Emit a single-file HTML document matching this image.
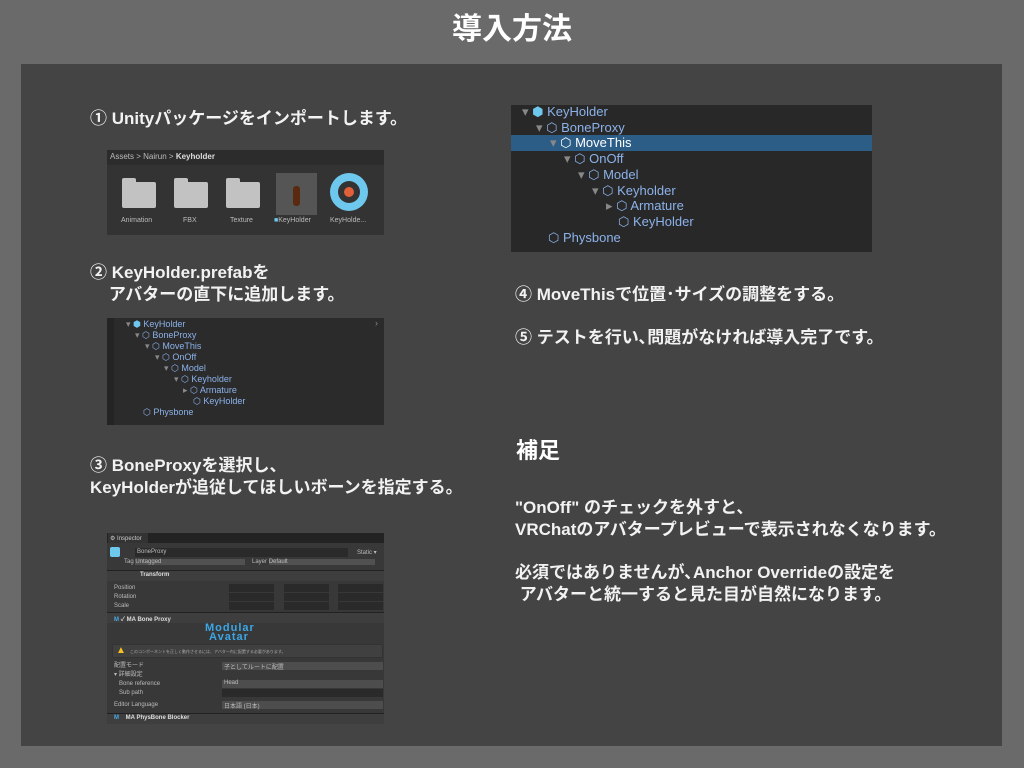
<!DOCTYPE html>
<html><head><meta charset="utf-8">
<style>
*{margin:0;padding:0;box-sizing:border-box}
body{width:1024px;height:768px;background:#6a6a6a;position:relative;overflow:hidden;font-family:"Liberation Sans","Noto Sans CJK JP",sans-serif;color:#fff}
.a{position:absolute;white-space:nowrap}
.t{font-weight:bold;font-size:17px;color:#f2f2f2;line-height:22px}
.h{color:#8cb2ea;font-size:13px}
.sh{color:#8cb2ea;font-size:9px}
.g{color:#bbb;font-size:6px}
.fld{position:absolute;background:#2a2a2a;height:8px}
.fo{position:absolute;width:34px;height:26px;background:#c2c2c2;border-radius:2px}
.fo:before{content:"";position:absolute;left:0;top:-4px;width:14px;height:6px;background:#c2c2c2;border-radius:2px 2px 0 0}
</style></head><body>
<div class="a" style="left:0;width:1024px;top:10px;text-align:center;font-size:30px;font-weight:bold;line-height:40px">導入方法</div>
<div class="a" style="left:21px;top:64px;width:981px;height:682px;background:#444"></div>

<div class="a t" style="left:90px;top:108px">① Unityパッケージをインポートします。</div>

<!-- project panel -->
<div class="a" style="left:107px;top:150px;width:277px;height:85px;background:#2c2c2c"></div>
<div class="a" style="left:110px;top:152px;font-size:8px;color:#bbb">Assets &gt; Nairun &gt; <b style="color:#ddd">Keyholder</b></div>
<div class="a" style="left:107px;top:165px;width:277px;height:70px;background:#333"></div>
<div class="fo" style="left:122px;top:182px"></div>
<div class="fo" style="left:174px;top:182px"></div>
<div class="fo" style="left:226px;top:182px"></div>
<div class="a" style="left:276px;top:173px;width:41px;height:42px;background:#555"></div>
<div class="a" style="left:293px;top:186px;width:7px;height:20px;background:#5a2a10;border-radius:3px"></div>
<div class="a" style="left:330px;top:173px;width:38px;height:38px;border-radius:50%;background:#6ec8ee"></div>
<div class="a" style="left:338px;top:181px;width:22px;height:22px;border-radius:50%;background:#333"></div>
<div class="a" style="left:344px;top:187px;width:10px;height:10px;border-radius:50%;background:#e0603a"></div>
<div class="a g" style="left:121px;top:217px;font-size:7px">Animation</div>
<div class="a g" style="left:183px;top:217px;font-size:7px">FBX</div>
<div class="a g" style="left:230px;top:217px;font-size:7px">Texture</div>
<div class="a g" style="left:274px;top:217px;font-size:7px"><span style="color:#6ec8ee">■</span>KeyHolder</div>
<div class="a g" style="left:330px;top:217px;font-size:7px">KeyHolde...</div>

<div class="a t" style="left:90px;top:262px">② KeyHolder.prefabを<br>&nbsp;&nbsp;&nbsp;&nbsp;アバターの直下に追加します。</div>

<!-- small hierarchy -->
<div class="a" style="left:107px;top:318px;width:277px;height:107px;background:#2b2b2b"></div>
<div class="a" style="left:107px;top:318px;width:7px;height:107px;background:#242424"></div>
<div class="a" style="left:375px;top:318px;color:#888;font-size:9px">›</div>
<div class="a sh" style="left:126px;top:319px;line-height:11px">
<div><span style="color:#888">▾</span> <span style="color:#6ec8ee">⬢</span> KeyHolder</div>
<div style="margin-left:9px"><span style="color:#888">▾</span> ⬡ BoneProxy</div>
<div style="margin-left:19px"><span style="color:#888">▾</span> ⬡ MoveThis</div>
<div style="margin-left:29px"><span style="color:#888">▾</span> ⬡ OnOff</div>
<div style="margin-left:38px"><span style="color:#888">▾</span> ⬡ Model</div>
<div style="margin-left:48px"><span style="color:#888">▾</span> ⬡ Keyholder</div>
<div style="margin-left:57px"><span style="color:#888">▸</span> ⬡ Armature</div>
<div style="margin-left:67px">⬡ KeyHolder</div>
<div style="margin-left:17px">⬡ Physbone</div>
</div>

<div class="a t" style="left:90px;top:455px">③ BoneProxyを選択し、<br>KeyHolderが追従してほしいボーンを指定する。</div>

<!-- inspector -->
<div class="a" style="left:107px;top:533px;width:277px;height:191px;background:#383838"></div>
<div class="a" style="left:107px;top:533px;width:277px;height:10px;background:#232323"></div>
<div class="a" style="left:108px;top:533px;width:40px;height:10px;background:#333;font-size:6px;color:#ccc;padding:2px">⚙ Inspector</div>
<div class="a" style="left:110px;top:547px;width:10px;height:10px;background:#6ec8ee;border-radius:2px"></div>
<div class="fld" style="left:135px;top:548px;width:213px;height:9px"></div>
<div class="a g" style="left:137px;top:549px">BoneProxy</div>
<div class="a g" style="left:357px;top:549px">Static ▾</div>
<div class="a g" style="left:124px;top:559px">Tag <span style="display:inline-block;width:110px;background:#515151">Untagged</span> &nbsp;&nbsp;&nbsp;Layer <span style="display:inline-block;width:106px;background:#515151">Default</span></div>
<div class="a" style="left:107px;top:570px;width:277px;height:11px;background:#3e3e3e;border-top:1px solid #222"></div>
<div class="a g" style="left:140px;top:572px;font-weight:bold;color:#ddd">Transform</div>
<div class="a g" style="left:114px;top:584px;line-height:9px">Position<br>Rotation<br>Scale</div>
<div class="fld" style="left:229px;top:584px;width:45px"></div><div class="fld" style="left:284px;top:584px;width:45px"></div><div class="fld" style="left:338px;top:584px;width:45px"></div>
<div class="fld" style="left:229px;top:593px;width:45px"></div><div class="fld" style="left:284px;top:593px;width:45px"></div><div class="fld" style="left:338px;top:593px;width:45px"></div>
<div class="fld" style="left:229px;top:602px;width:45px"></div><div class="fld" style="left:284px;top:602px;width:45px"></div><div class="fld" style="left:338px;top:602px;width:45px"></div>
<div class="a" style="left:107px;top:612px;width:277px;height:11px;background:#3e3e3e;border-top:1px solid #222"></div>
<div class="a g" style="left:114px;top:614px;font-weight:bold;color:#ddd"><span style="color:#4aa8e0">M</span> ✓ MA Bone Proxy</div>
<div class="a" style="left:205px;top:624px;font-size:11px;font-weight:bold;color:#3aa8e8;line-height:9px;letter-spacing:1px">Modular<br>&nbsp;Avatar</div>
<div class="a" style="left:112px;top:644px;width:271px;height:14px;background:#404040;border:1px solid #333"></div>
<div class="a" style="left:116px;top:645px;color:#f5c020;font-size:10px">▲</div>
<div class="a" style="left:130px;top:649px;font-size:4px;color:#aaa">このコンポーネントを正しく動作させるには、アバター内に配置する必要があります。</div>
<div class="a g" style="left:114px;top:662px;line-height:9px">配置モード<br>▾ 詳細設定<br>&nbsp;&nbsp;&nbsp;Bone reference<br>&nbsp;&nbsp;&nbsp;Sub path</div>
<div class="fld" style="left:222px;top:662px;width:161px;background:#4d4d4d"></div>
<div class="a g" style="left:224px;top:662px">子としてルートに配置</div>
<div class="fld" style="left:222px;top:680px;width:161px;background:#4d4d4d"></div>
<div class="a g" style="left:224px;top:680px">Head</div>
<div class="fld" style="left:222px;top:689px;width:161px"></div>
<div class="a g" style="left:114px;top:702px">Editor Language</div>
<div class="fld" style="left:222px;top:701px;width:161px;background:#4d4d4d"></div>
<div class="a g" style="left:224px;top:701px">日本語 (日本)</div>
<div class="a" style="left:107px;top:713px;width:277px;height:11px;background:#3e3e3e;border-top:1px solid #222"></div>
<div class="a g" style="left:114px;top:715px;font-weight:bold;color:#ddd"><span style="color:#4aa8e0">M</span> &nbsp;&nbsp;&nbsp;MA PhysBone Blocker</div>

<!-- right hierarchy -->
<div class="a" style="left:511px;top:105px;width:361px;height:147px;background:#282828"></div>
<div class="a" style="left:511px;top:135px;width:361px;height:16px;background:#2c5d87"></div>
<div class="a h" style="left:522px;top:104px;line-height:15.7px">
<div><span style="color:#888">▾</span> <span style="color:#6ec8ee">⬢</span> KeyHolder</div>
<div style="margin-left:14px"><span style="color:#888">▾</span> ⬡ BoneProxy</div>
<div style="margin-left:28px;color:#fff"><span style="color:#888">▾</span> ⬡ MoveThis</div>
<div style="margin-left:42px"><span style="color:#888">▾</span> ⬡ OnOff</div>
<div style="margin-left:56px"><span style="color:#888">▾</span> ⬡ Model</div>
<div style="margin-left:70px"><span style="color:#888">▾</span> ⬡ Keyholder</div>
<div style="margin-left:84px"><span style="color:#888">▸</span> ⬡ Armature</div>
<div style="margin-left:96px">⬡ KeyHolder</div>
<div style="margin-left:26px">⬡ Physbone</div>
</div>

<div class="a t" style="left:515px;top:284px">④ MoveThisで位置･サイズの調整をする。</div>
<div class="a t" style="left:515px;top:327px">⑤ テストを行い､問題がなければ導入完了です。</div>
<div class="a" style="left:516px;top:437px;font-size:22px;font-weight:bold;line-height:28px">補足</div>
<div class="a t" style="left:515px;top:497px;line-height:22px">"OnOff" のチェックを外すと、<br>VRChatのアバタープレビューで表示されなくなります。</div>
<div class="a t" style="left:515px;top:562px;line-height:22px">必須ではありませんが､Anchor Overrideの設定を<br>&nbsp;アバターと統一すると見た目が自然になります。</div>
</body></html>
